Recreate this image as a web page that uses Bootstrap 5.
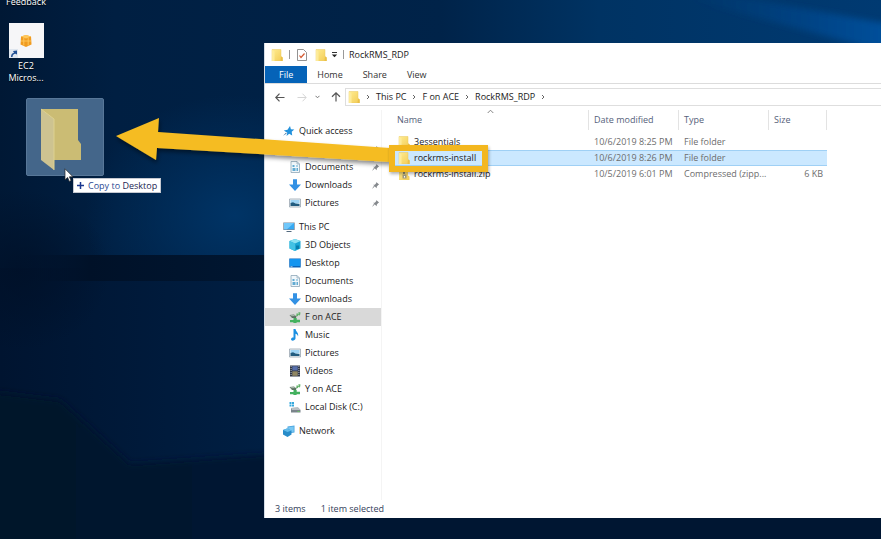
<!DOCTYPE html>
<html lang="en">
<head>
<meta charset="utf-8">
<meta name="viewport" content="width=device-width, initial-scale=1">
<title>RockRMS_RDP</title>
<link rel="stylesheet" href="https://cdn.jsdelivr.net/npm/bootstrap@5.3.0/dist/css/bootstrap.min.css">
<style>
  body {
    font-family: "Open Sans", "Noto Sans", sans-serif;
    font-size: 9px;
    line-height: 12px;
    color: #222;
    background: #001737;
  }
  svg { display: block; flex: none; }
  button, a { color: inherit; text-decoration: none; }
  button { border: 0; background: none; padding: 0; }
  .desktop { min-height: 100vh; }
  .wallpaper { inset: 0; width: 100%; height: 100%; }

  .shortcut { width: 52px; margin-top: -4px; color: #fff; text-align: center; text-shadow: 0 1px 1px #000; }
  .tile { width: 35px; height: 35px; margin: 15px 0 2px; background: #f6f6f8; }
  .tile-arrow { left: 0; bottom: 0; }
  .drag-ghost { left: 26px; top: 98px; width: 78px; height: 78px; background: #44668a; border: 1px solid #587798; border-radius: 2px; }
  .pointer { left: 64px; top: 168px; }
  .drop-tip { left: 73px; top: 178px; height: 15px; padding: 0 3px; gap: 4px; background: #fff; border: 1px solid #c4c8d0; color: #2c4a94; }
  .drop-tip b { font-weight: 400; color: #1d2552; }

  .explorer { left: 264px; right: 0; top: 43px; bottom: 21px; background: #fff; border-left: 1px solid #d5dde6; }
  .title-row { height: 23px; padding-left: 6px; }
  .rule { width: 1px; height: 9px; margin: 0 7px 0 6px; background: #999; }
  .title-row .rule-end { margin: 0 5px; }
  .tab-row { height: 18px; border-bottom: 1px solid #dcdcdc; }
  .tab-row button { padding: 0 10px; color: #333; }
  .tab-row .file-tab { padding: 0 14px; background: #0563b8; color: #fff; }
  .path-row { height: 26px; padding: 4px 0 4px 10px; }
  .up-btn { margin-left: 7px; }
  .path-box { height: 18px; margin-left: 4px; padding-left: 2px; border: 1px solid #dedede; border-right: 0; gap: 6px; }
  .side { width: 117px; padding-top: 12px; flex: none; border-right: 1px solid #f4f4f4; }
  .side ul + ul { margin-top: 6px; }
  .side li { height: 18px; }
  .side a { height: 18px; gap: 4px; padding-left: 24px; }
  .side .top-item { padding-left: 18px; }
  .side .current { background: #d9d9d9; }
  .side .pin { margin: 0 1px 0 auto; }

  .files { width: 438px; table-layout: fixed; margin-left: 7px; border-collapse: separate; border-spacing: 0; color: #6d6d6d; white-space: nowrap; }
  .files th { height: 20px; padding: 0 0 0 5px; font-weight: 400; color: #55617a; border-right: 1px solid #e3e3e3; }
  .files th:first-child { padding-left: 8px; }
  .files td { height: 16px; padding: 0 0 0 5px; line-height: 14px; border: solid transparent; border-width: 1px 0; }
  .files td:first-child { padding-left: 9px; color: #222; }
  .files td:last-child { padding-right: 4px; text-align: right; }
  .files .picked td { background: #cbe8ff; border-color: #9fd0f5; }
  .sort { left: 98px; top: -1px; }
  .gap-line { height: 4px; }
  .status { height: 18px; padding-left: 10px; gap: 15px; color: #33405a; }
  .callout-arrow { left: 110px; top: 112px; }
  .callout-box { left: 389px; top: 145px; width: 99px; height: 27px; border: 6px solid #f3b71f; box-shadow: 1px 2px 3px rgba(0,0,0,.3); }
</style>
<script src="https://cdn.jsdelivr.net/npm/bootstrap@5.3.0/dist/js/bootstrap.bundle.min.js"></script>
</head>
<body>
<svg width="0" height="0" class="position-absolute" aria-hidden="true">
  <defs>
    <linearGradient id="gold" x1="0" y1="0" x2="1" y2="1"><stop offset="0" stop-color="#ffec90"/><stop offset="1" stop-color="#f2cb55"/></linearGradient>
    <symbol id="i-folder" viewBox="0 0 12 12"><path d="M1 .5h9v7l1.500 1V12H1z" fill="url(#gold)" stroke="#e9c860" stroke-width=".5"/><path d="M1 .5 3.500 2.500V12H1z" fill="#fdeb9a"/><path d="M10 7.500 11.500 8.500V12H9.500z" fill="#eabf48"/></symbol>
    <symbol id="i-zip" viewBox="0 0 12 12"><path d="M1 .5h9v7l1.500 1V12H1z" fill="url(#gold)"/><path d="M5 0h2v2H5zm1 2h2v2H6zM5 4h2v2H5z" fill="#8e8a70"/><path d="M4.500 6.500h4v4h-4z" fill="#a09a80"/><path d="M6 8h1v1.500H6z" fill="#fff"/></symbol>
    <symbol id="i-star" viewBox="0 0 12 12"><path d="m7 1 .9 3.200 3.400.3-2.600 2.300.5 3.700-3-1.800L3.500 11l.8-3.300L.8 5.500l3.700-.7z" fill="#2291dc"/><path d="m0 10.800 3-3 .7.800z" fill="#3a6c9c"/></symbol>
    <symbol id="i-doc" viewBox="0 0 12 12"><path d="M2 .5h6l2.500 2.500v8.500H2z" fill="#f1f7fb" stroke="#8ea7b8" stroke-width=".8"/><path d="M8 .5V3h2.500" fill="none" stroke="#8ea7b8" stroke-width=".7"/><path d="M3.500 4h2v2h-2zM3.500 7h3v3h-3zM7 4.500h2v1H7zM7.500 7h1.500v3H7.500z" fill="#62abd2"/></symbol>
    <symbol id="i-down" viewBox="0 0 12 12"><path d="M4 .3h4V5.500h4L6 12 0 5.500h4z" fill="#3391e4"/></symbol>
    <symbol id="i-pic" viewBox="0 0 12 12"><path d="M.5 2h11v8H.5z" fill="#eef3f6" stroke="#8d9ba6" stroke-width=".7"/><path d="M1.500 3h9v3.500h-9z" fill="#9fd4f5"/><path d="M1.500 6 4 5.200 6.500 6.500l4 .5v2h-9z" fill="#225c80"/></symbol>
    <symbol id="i-pc" viewBox="0 0 12 12"><path d="M.3 1.500h11.400v7.500H.3z" fill="#78899a"/><path d="M1 2h10v6.300H1z" fill="#36a9f3"/><path d="M1 2h10L4 8.300H1z" fill="#70c7fa"/><path d="M3.500 10h5v1h-5z" fill="#536a7e"/></symbol>
    <symbol id="i-cube" viewBox="0 0 12 12"><path d="m6 0 5.500 2v7.500L6 12 .5 9.500V2z" fill="#1aa6d4"/><path d="m6 0 5.500 2L6 4.500.5 2z" fill="#8be2f2"/><path d="M6 4.500V12L.5 9.500V2z" fill="#42c2e4"/><path d="M7 6.500h3V10H7z" fill="#077dad"/></symbol>
    <symbol id="i-desk" viewBox="0 0 12 12"><path d="M.3 1.500h11.400v9H.3z" fill="#0b64b9"/><path d="M.8 2h10.400v7H.8z" fill="#1495f0"/><path d="M1.500 9.500h2v.6h-2z" fill="#fff"/></symbol>
    <symbol id="i-drive" viewBox="0 0 12 12"><path d="M.5 4 5 3.500 7.500 5.500 7 7H3z" fill="#5d7263"/><path d="m1 4.200 3.800-.3L6.500 5l-4 .3z" fill="#a9b8ab"/><path d="M4.500 7h3.200v1.800H11v2.400H8l-.8.8H4.800L4 11.200H1V9h3.500z" fill="#43b15e"/><path d="M7 5.500 7.800 2l1.700 1.200L9 5zM9.500 1l2 .5-.5 3-1.500-.5z" fill="#63b26a"/></symbol>
    <symbol id="i-music" viewBox="0 0 12 12"><path d="M4.500 0H6.500C7 3 10 3.500 9 7.500 8.700 5.800 7.500 5 6.500 4.800v4.700C6 12 2 12.400 2 10.300 2.100 8.500 3.800 8.300 4.500 8.500z" fill="#1c90e2"/></symbol>
    <symbol id="i-video" viewBox="0 0 12 12"><path d="M1 .5h10v11H1z" fill="#303746"/><path d="M3.300 1.200h5.400v4.300H3.300z" fill="#576fab"/><path d="M3.300 6.300h5.400v4.500H3.300z" fill="#918763"/><path d="M2.100 1v10M9.900 1v10" stroke="#d0d5da" stroke-width=".8" stroke-dasharray="1 1"/></symbol>
    <symbol id="i-disk" viewBox="0 0 12 12"><path d="M.5 1h2v2h-2zM3 1h2v2H3zM.5 3.500h2v2h-2zM3 3.500h2v2H3z" fill="#35a9dd"/><path d="m2 7 7-.5 2.500 2.500v2.500H2z" fill="#7a848b"/><path d="m2 7 7-.5 2.500 2.500H3z" fill="#b9c0c4"/><path d="M8.500 10h2v.8h-2z" fill="#68d05c"/></symbol>
    <symbol id="i-net" viewBox="0 0 12 12"><path d="m4.500 1.500 7-1v7l-7 1z" fill="#4aa5df"/><path d="m5.300 2.300 5.400-.8v5.300l-5.400.8z" fill="#79c7f2"/><path d="m0 5 4-1.500 4.500 2v4L4.500 12 0 9.500z" fill="#288cc9"/><path d="m0 5 4-1.500 4.500 2-4 1.500z" fill="#62bceb"/></symbol>
    <symbol id="i-pin" viewBox="0 0 10 10"><path d="m5.800 1 3.200 3-1 .4-1.500 1.800-.3 1.800L2.500 4.300l1.800-.2 1.600-1.800zM4.200 6.200 1 9l2.300-3.600z" fill="#85898d"/></symbol>
    <symbol id="i-sep" viewBox="0 0 4 6"><path d="m1 1 2 2-2 2" fill="none" stroke="#555" stroke-width=".9"/></symbol>
  </defs>
</svg>

<main class="desktop position-relative overflow-hidden">
  <svg class="wallpaper position-absolute" viewBox="0 0 881 539" preserveAspectRatio="none" aria-hidden="true">
    <defs>
      <linearGradient id="sky" x1="0" x2="1"><stop offset="0" stop-color="#001835"/><stop offset=".13" stop-color="#001f42"/><stop offset=".5" stop-color="#002349"/><stop offset=".68" stop-color="#003363"/><stop offset="1" stop-color="#003a72"/></linearGradient>
      <radialGradient id="glow"><stop offset="0" stop-color="#003466"/><stop offset="1" stop-color="#003466" stop-opacity="0"/></radialGradient>
      <linearGradient id="low" x1="0" x2="1"><stop offset="0" stop-color="#001430"/><stop offset=".3" stop-color="#001f43"/><stop offset="1" stop-color="#001b3e"/></linearGradient>
      <radialGradient id="shade"><stop offset="0" stop-color="#001027" stop-opacity=".8"/><stop offset="1" stop-color="#001027" stop-opacity="0"/></radialGradient>
      <linearGradient id="band" x1="0" x2="1"><stop offset="0" stop-color="#00122c" stop-opacity="0"/><stop offset=".3" stop-color="#001128"/><stop offset="1" stop-color="#001834"/></linearGradient>
      <linearGradient id="base" x1="0" x2="1"><stop offset="0" stop-color="#001129"/><stop offset=".3" stop-color="#001531"/><stop offset="1" stop-color="#001734"/></linearGradient>
      <linearGradient id="beam" x1="0" x2="1"><stop offset="0" stop-color="#00448a" stop-opacity="0"/><stop offset="1" stop-color="#0052a0"/></linearGradient>
      <filter id="edge" x="-20%" y="-20%" width="140%" height="140%"><feGaussianBlur stdDeviation="3"/></filter>
    </defs>
    <path d="M0 0h881v539H0z" fill="url(#sky)"/>
    <ellipse cx="235" cy="215" rx="150" ry="120" fill="url(#glow)"/>
    <path d="M0 268h881v271H0z" fill="url(#low)"/>
    <ellipse cx="20" cy="270" rx="90" ry="80" fill="url(#shade)"/>
    <path d="M0 255h300v26H0z" fill="url(#band)"/>
    <path d="M-60 385 60 400 130 464 300 452 960 452V620H-60z" fill="url(#base)" filter="url(#edge)"/>
    <path d="M690-12 900 26v30L690 0z" fill="url(#beam)" filter="url(#edge)"/>
  </svg>

  <div class="position-relative d-flex flex-column align-items-center shortcut">
    <div>Feedback</div>
    <div class="tile position-relative d-flex align-items-center justify-content-center">
      <svg width="12" height="12" viewBox="0 0 12 12" aria-hidden="true"><path d="m6 0 5 1.500.5 8L6 12 .5 9.500l.5-8z" fill="#f09b20"/><path d="m6 0 5 1.500L6 3.500 1 1.500z" fill="#ffc85c"/><path d="M3.800 2.500v8M8.200 2.500v8M1 6h10" stroke="#ffc95f" stroke-width=".9"/></svg>
      <svg class="tile-arrow position-absolute" width="9" height="9" viewBox="0 0 9 9" aria-hidden="true"><path d="M0 0h9v9H0z" fill="#dfe6ef"/><path d="M2 8C2 5 3 4 5 3.700L4 2l4-.5V5.500L6.500 4.800C4.500 5 3.500 6 3.500 8z" fill="#204f94"/></svg>
    </div>
    <div>EC2<br>Micros...</div>
  </div>

  <div class="drag-ghost position-absolute">
    <svg width="76" height="76" viewBox="0 0 76 76" aria-hidden="true">
      <path d="M14 10h37v31l3 4v16H14z" fill="#cbbc74"/><path d="m14 10 13 10v51L14 61z" fill="#cdc391"/><path d="m14 10 13 10v51" fill="none" stroke="#ded18f"/>
    </svg>
  </div>

  <section class="explorer position-absolute d-flex flex-column" aria-label="RockRMS_RDP">
    <header class="title-row d-flex align-items-center">
      <svg width="12" height="12"><use href="#i-folder"/></svg>
      <span class="rule"></span>
      <button type="button" aria-label="Properties"><svg width="10" height="12" viewBox="0 0 10 12"><path d="M.5.5h6l3 3v8h-9z" fill="#fff" stroke="#777" stroke-width=".8"/><path d="m2.500 6.500 1.500 2 3.500-4" fill="none" stroke="#d45830" stroke-width="1.200"/></svg></button>
      <button type="button" class="ms-1 ps-1" aria-label="New folder"><svg width="12" height="12"><use href="#i-folder"/></svg></button>
      <button type="button" class="ms-1" aria-label="Customize toolbar"><svg width="7" height="7" viewBox="0 0 7 7"><path d="M1 1.500h5" stroke="#333"/><path d="M.8 3.500h5.400L3.500 6.200z" fill="#222"/></svg></button>
      <span class="rule rule-end"></span>
      <span>RockRMS_RDP</span>
    </header>
    <div class="tab-row d-flex">
      <button type="button" class="file-tab">File</button>
      <button type="button">Home</button>
      <button type="button">Share</button>
      <button type="button">View</button>
    </div>
    <div class="path-row d-flex align-items-center">
      <button type="button" aria-label="Back"><svg width="10" height="9" viewBox="0 0 10 9"><path d="M4.500.7.800 4.500l3.700 3.800M1 4.500h8.500" fill="none" stroke="#555" stroke-width="1.200"/></svg></button>
      <button type="button" class="ms-2 ps-1" aria-label="Forward"><svg width="10" height="9" viewBox="0 0 10 9"><path d="m5.500.7 3.700 3.800-3.700 3.800M9 4.500H.5" fill="none" stroke="#d5d5d5"/></svg></button>
      <button type="button" class="ms-2" aria-label="Recent"><svg width="5" height="4" viewBox="0 0 5 4"><path d="m.5.8 2 2 2-2" fill="none" stroke="#777"/></svg></button>
      <button type="button" class="up-btn ps-1 pe-0" aria-label="Up"><svg width="10" height="10" viewBox="0 0 10 10"><path d="M1 4.700 5 .9l4 3.800M5 1v8.500" fill="none" stroke="#555" stroke-width="1.200"/></svg></button>
      <nav class="path-box flex-grow-1 d-flex align-items-center" aria-label="Path">
        <svg width="12" height="12"><use href="#i-folder"/></svg>
        <svg width="4" height="6"><use href="#i-sep"/></svg><a href="#">This PC</a>
        <svg width="4" height="6"><use href="#i-sep"/></svg><a href="#">F on ACE</a>
        <svg width="4" height="6"><use href="#i-sep"/></svg><a href="#">RockRMS_RDP</a>
        <svg width="4" height="6"><use href="#i-sep"/></svg>
      </nav>
    </div>
    <div class="d-flex flex-grow-1">
      <nav class="side" aria-label="Folders">
        <ul class="list-unstyled mb-0">
          <li><a href="#" class="top-item d-flex align-items-center"><svg width="12" height="12"><use href="#i-star"/></svg>Quick access</a></li>
          <li class="d-flex align-items-center"><svg class="pin" width="9" height="9"><use href="#i-pin"/></svg></li>
          <li><a href="#" class="d-flex align-items-center"><svg width="12" height="12"><use href="#i-doc"/></svg>Documents<svg class="pin" width="9" height="9"><use href="#i-pin"/></svg></a></li>
          <li><a href="#" class="d-flex align-items-center"><svg width="12" height="12"><use href="#i-down"/></svg>Downloads<svg class="pin" width="9" height="9"><use href="#i-pin"/></svg></a></li>
          <li><a href="#" class="d-flex align-items-center"><svg width="12" height="12"><use href="#i-pic"/></svg>Pictures<svg class="pin" width="9" height="9"><use href="#i-pin"/></svg></a></li>
        </ul>
        <ul class="list-unstyled mb-0">
          <li><a href="#" class="top-item d-flex align-items-center"><svg width="12" height="12"><use href="#i-pc"/></svg>This PC</a></li>
          <li><a href="#" class="d-flex align-items-center"><svg width="12" height="12"><use href="#i-cube"/></svg>3D Objects</a></li>
          <li><a href="#" class="d-flex align-items-center"><svg width="12" height="12"><use href="#i-desk"/></svg>Desktop</a></li>
          <li><a href="#" class="d-flex align-items-center"><svg width="12" height="12"><use href="#i-doc"/></svg>Documents</a></li>
          <li><a href="#" class="d-flex align-items-center"><svg width="12" height="12"><use href="#i-down"/></svg>Downloads</a></li>
          <li><a href="#" class="current d-flex align-items-center"><svg width="12" height="12"><use href="#i-drive"/></svg>F on ACE</a></li>
          <li><a href="#" class="d-flex align-items-center"><svg width="12" height="12"><use href="#i-music"/></svg>Music</a></li>
          <li><a href="#" class="d-flex align-items-center"><svg width="12" height="12"><use href="#i-pic"/></svg>Pictures</a></li>
          <li><a href="#" class="d-flex align-items-center"><svg width="12" height="12"><use href="#i-video"/></svg>Videos</a></li>
          <li><a href="#" class="d-flex align-items-center"><svg width="12" height="12"><use href="#i-drive"/></svg>Y on ACE</a></li>
          <li><a href="#" class="d-flex align-items-center"><svg width="12" height="12"><use href="#i-disk"/></svg>Local Disk (C:)</a></li>
        </ul>
        <ul class="list-unstyled mb-0">
          <li><a href="#" class="top-item d-flex align-items-center"><svg width="12" height="12"><use href="#i-net"/></svg>Network</a></li>
        </ul>
      </nav>
      <div>
        <table class="files">
          <colgroup><col style="width:200px"><col style="width:90px"><col style="width:90px"><col style="width:58px"></colgroup>
          <thead>
            <tr><th scope="col" class="position-relative">Name<svg class="sort position-absolute" width="7" height="5" viewBox="0 0 7 5" aria-hidden="true"><path d="m.7 4 2.800-2.800L6.300 4" fill="none" stroke="#777" stroke-width=".9"/></svg></th><th scope="col">Date modified</th><th scope="col">Type</th><th scope="col">Size</th></tr>
            <tr class="gap-line" aria-hidden="true"></tr>
          </thead>
          <tbody>
            <tr><td><div class="d-flex align-items-center gap-1"><svg width="12" height="12"><use href="#i-folder"/></svg>3essentials</div></td><td>10/6/2019 8:25 PM</td><td>File folder</td><td></td></tr>
            <tr class="picked"><td><div class="d-flex align-items-center gap-1"><svg width="12" height="12"><use href="#i-folder"/></svg>rockrms-install</div></td><td>10/6/2019 8:26 PM</td><td>File folder</td><td></td></tr>
            <tr><td><div class="d-flex align-items-center gap-1"><svg width="12" height="12"><use href="#i-zip"/></svg>rockrms-install.zip</div></td><td>10/5/2019 6:01 PM</td><td>Compressed (zipp...</td><td>6 KB</td></tr>
          </tbody>
        </table>
      </div>
    </div>
    <footer class="status d-flex align-items-center"><span>3 items</span><span>1 item selected</span></footer>
  </section>

  <svg class="callout-arrow position-absolute" width="284" height="60" viewBox="0 0 284 60" aria-hidden="true">
    <defs><filter id="cast" x="-5%" y="-20%" width="110%" height="150%"><feDropShadow dx="1" dy="3" stdDeviation="2" flood-opacity=".45"/></filter></defs>
    <path d="M6 24 49 6l-1 14 232 16v14L47 36l-1 12z" fill="#f5bc22" filter="url(#cast)"/>
  </svg>
  <div class="callout-box position-absolute"></div>

  <div class="drop-tip position-absolute d-flex align-items-center">
    <svg width="7" height="7" viewBox="0 0 7 7" aria-hidden="true"><path d="M3.500 0v7M0 3.500h7" stroke="#1b388f" stroke-width="1.500"/></svg>
    <span>Copy to <b>Desktop</b></span>
  </div>
  <svg class="pointer position-absolute" width="11" height="15" viewBox="0 0 11 15" aria-hidden="true"><path d="M1 .8v11l2.600-2.400 1.700 4 1.800-.8-1.700-3.800H9z" fill="#fff" stroke="#222" stroke-width=".7"/></svg>
</main>
</body>
</html>
